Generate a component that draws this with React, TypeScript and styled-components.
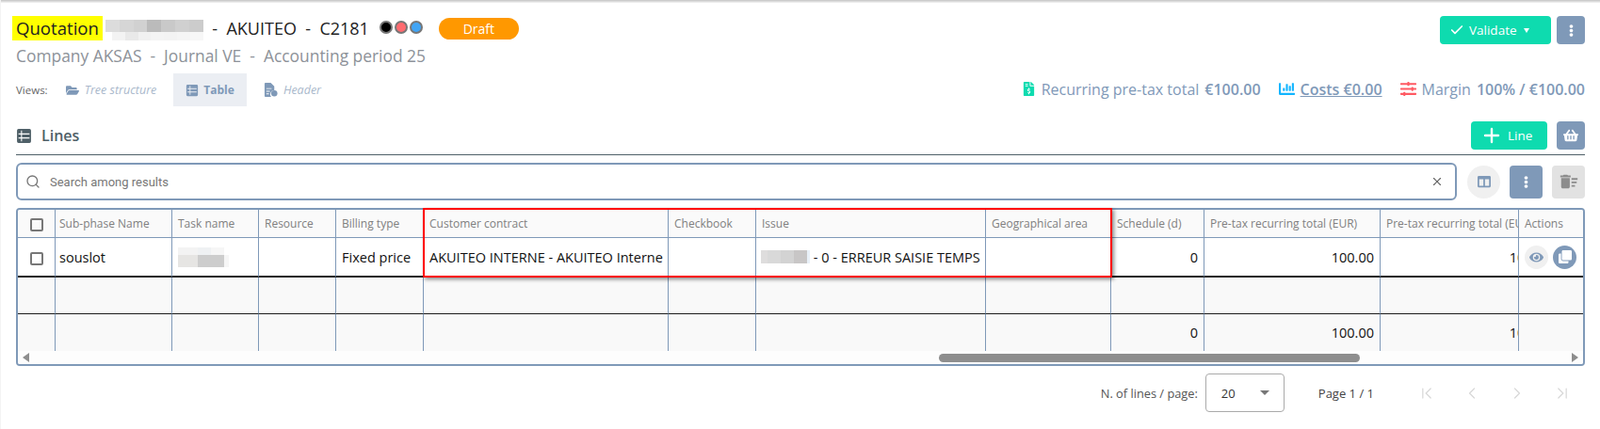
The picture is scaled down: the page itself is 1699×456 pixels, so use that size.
import styled, { createGlobalStyle } from "styled-components";
import {
  FaChartBar,
  FaClone,
  FaColumns,
  FaEllipsisV,
  FaEye,
  FaFileInvoiceDollar,
  FaFolderOpen,
  FaShoppingBasket,
  FaSlidersH,
} from "react-icons/fa";
import { MdDeleteSweep } from "react-icons/md";
import { Check, ChevronFirst, ChevronLast, ChevronLeft, ChevronRight, Plus, Search, X } from "lucide-react";

const BLUE = "#7f99b8";
const GREEN = "#0edbaf";

const columns = [40, 124, 92, 82, 93, 260, 93, 244, 133, 99, 187, 147, 68];

const TableIcon = ({ size }: { size: number }) => (
  <svg width={size} height={size} viewBox="0 0 16 16" fill="currentColor" fillRule="evenodd">
    <path d="M2.5 1h11A1.5 1.5 0 0 1 15 2.500v11a1.500 1.500 0 0 1-1.500 1.500h-11A1.500 1.500 0 0 1 1 13.500v-11A1.500 1.500 0 0 1 2.500 1zM2.500 5.500v1h11v-1zM2.500 9.500v1h11v-1zM5 2.500v3h1v-3zM5 6.500v3h1v-3zM5 10.500v3h1v-3z" />
  </svg>
);

const HeaderIcon = () => (
  <svg width="15" height="15" viewBox="0 0 16 16" fill="currentColor" fillRule="evenodd">
    <path d="M2 0h6l4 4v4.500a4.500 4.500 0 0 0-3.500 7.500H2a1 1 0 0 1-1-1V1a1 1 0 0 1 1-1zM3 6v1h6V6zM3 9v1h4V9zM3 12v1h3v-1z" />
    <circle cx="12" cy="12" r="3.500" />
  </svg>
);

const App = () => {
  return (
    <Page>
      <GlobalStyle />
      <TopShade />
      <Content>
        <HeadRow>
          <TitleRow>
            <Highlight>Quotation</Highlight>
            <Mosaic>
              <MosaicRow $h={13}>
                {["#dcdcdc", "#d6d6d6", "#d1d1d1", "#bbbbbb", "#c9c9c9", "#d0d0d0", "#cccccc"].map((c, i) => (
                  <Pixel key={i} $c={c} $w={14.8} />
                ))}
              </MosaicRow>
              <MosaicRow $h={9}>
                {["#ffffff", "#f3f3f3", "#e9e9e9", "#f1f1f1", "#f4f4f4", "#f3f3f3", "#f5f5f5", "#f7f7f7"].map((c, i) => (
                  <Pixel key={i} $c={c} $w={i === 0 ? 7 : 13.8} />
                ))}
              </MosaicRow>
            </Mosaic>
            <TitleText>{"  -  AKUITEO  -  C2181"}</TitleText>
            <Dots>
              <Dot $c="#000000" />
              <Dot $c="#ff6b70" />
              <Dot $c="#42a5f5" />
            </Dots>
            <StatusPill>Draft</StatusPill>
          </TitleRow>
          <ButtonGroup $gap={6}>
            <PrimaryButton $w={118}>
              <Check size={16} strokeWidth={2.5} />
              <span>Validate</span>
              <Caret />
            </PrimaryButton>
            <SquareButton>
              <FaEllipsisV size={13} />
            </SquareButton>
          </ButtonGroup>
        </HeadRow>
        <Subtitle>{"Company AKSAS  -  Journal VE  -  Accounting period 25"}</Subtitle>
        <ViewsRow>
          <Views>
            <ViewsLabel>Views:</ViewsLabel>
            <ViewTab>
              <FaFolderOpen size={14} />
              Tree structure
            </ViewTab>
            <ViewTab $active>
              <TableIcon size={14} />
              Table
            </ViewTab>
            <ViewTab>
              <HeaderIcon />
              Header
            </ViewTab>
          </Views>
          <Stats>
            <Stat>
              <FaFileInvoiceDollar size={15} color={GREEN} />
              <StatLabel>Recurring pre-tax total</StatLabel>
              <StatValue>€100.00</StatValue>
            </Stat>
            <Stat>
              <FaChartBar size={17} color="#12b5ff" />
              <StatLink>Costs €0.00</StatLink>
            </Stat>
            <Stat>
              <FaSlidersH size={17} color="#ff5a63" />
              <StatLabel>Margin</StatLabel>
              <StatValue>100% / €100.00</StatValue>
            </Stat>
          </Stats>
        </ViewsRow>
        <SectionHead>
          <SectionTitle>
            <TableIcon size={17} />
            Lines
          </SectionTitle>
          <ButtonGroup $gap={10}>
            <PrimaryButton $w={81}>
              <Plus size={24} strokeWidth={2.4} />
              <span>Line</span>
            </PrimaryButton>
            <SquareButton>
              <FaShoppingBasket size={16} />
            </SquareButton>
          </ButtonGroup>
        </SectionHead>
        <Toolbar>
          <SearchBox>
            <Search size={16} color="#777777" />
            <SearchInput placeholder="Search among results" />
            <X size={14} color="#666666" />
          </SearchBox>
          <RoundTool>
            <FaColumns size={14} />
          </RoundTool>
          <SquareTool>
            <FaEllipsisV size={13} />
          </SquareTool>
          <DisabledTool>
            <MdDeleteSweep size={22} />
          </DisabledTool>
        </Toolbar>
        <TableFrame>
          <TableBox>
            <Grid>
              <colgroup>
                {columns.map((w, i) => (
                  <col key={i} style={{ width: w }} />
                ))}
              </colgroup>
              <thead>
                <tr>
                  <Th $center>
                    <CheckBox />
                  </Th>
                  <Th>Sub-phase Name</Th>
                  <Th>Task name</Th>
                  <Th>Resource</Th>
                  <Th>Billing type</Th>
                  <Th>Customer contract</Th>
                  <Th>Checkbook</Th>
                  <Th>Issue</Th>
                  <Th>Geographical area</Th>
                  <Th>Schedule (d)</Th>
                  <Th>Pre-tax recurring total (EUR)</Th>
                  <Th>Pre-tax recurring total (EUR)</Th>
                  <Th $last>Actions</Th>
                </tr>
              </thead>
              <tbody>
                <DataRow>
                  <Td $center>
                    <CheckBox />
                  </Td>
                  <Td>souslot</Td>
                  <Td>
                    <TaskMosaic>
                      <MosaicRow $h={8}>
                        <Pixel $c="#f3f3f3" $w={21} />
                        <Pixel $c="#eff1f3" $w={14} />
                        <Pixel $c="#f6f6f6" $w={14} />
                      </MosaicRow>
                      <MosaicRow $h={13}>
                        <Pixel $c="#e6e5e3" $w={21} />
                        <Pixel $c="#cdcdcd" $w={28} />
                        <Pixel $c="#f6f6f6" $w={5} />
                      </MosaicRow>
                    </TaskMosaic>
                  </Td>
                  <Td />
                  <Td>Fixed price</Td>
                  <Td>AKUITEO INTERNE - AKUITEO Interne</Td>
                  <Td />
                  <Td>
                    <IssueCell>
                      <MosaicRow $h={14}>
                        <Pixel $c="#dedddd" $w={7} />
                        <Pixel $c="#d9d9d9" $w={14} />
                        <Pixel $c="#d3d3d3" $w={14} />
                        <Pixel $c="#c8c6c6" $w={14} />
                        <Pixel $c="#e9f1f8" $w={3} />
                      </MosaicRow>
                      {" - 0 - ERREUR SAISIE TEMPS"}
                    </IssueCell>
                  </Td>
                  <Td />
                  <Td $right>0</Td>
                  <Td $right>100.00</Td>
                  <Td>
                    <ClippedAmount>100.00</ClippedAmount>
                  </Td>
                  <Td $last>
                    <RowActions>
                      <GhostAction>
                        <FaEye size={15} />
                      </GhostAction>
                      <SolidAction>
                        <FaClone size={14} />
                      </SolidAction>
                    </RowActions>
                  </Td>
                </DataRow>
                <EmptyRow>
                  {columns.map((_, i) => (
                    <Td key={i} $last={i === columns.length - 1} />
                  ))}
                </EmptyRow>
                <TotalRow>
                  <Td />
                  <Td />
                  <Td />
                  <Td />
                  <Td />
                  <Td />
                  <Td />
                  <Td />
                  <Td />
                  <Td $right>0</Td>
                  <Td $right>100.00</Td>
                  <Td>
                    <ClippedAmount>100.00</ClippedAmount>
                  </Td>
                  <Td $last />
                </TotalRow>
              </tbody>
            </Grid>
            <ScrollBar>
              <ArrowLeft />
              <Thumb />
              <ArrowRight />
            </ScrollBar>
          </TableBox>
          <RedBox />
        </TableFrame>
        <Pagination>
          <PagerLabel>N. of lines / page:</PagerLabel>
          <PageSize>
            20
            <SelectCaret />
          </PageSize>
          <PageInfo>Page 1 / 1</PageInfo>
          <PagerButtons>
            <PagerButton>
              <ChevronFirst size={20} strokeWidth={1.5} />
            </PagerButton>
            <PagerButton>
              <ChevronLeft size={20} strokeWidth={1.5} />
            </PagerButton>
            <PagerButton>
              <ChevronRight size={20} strokeWidth={1.5} />
            </PagerButton>
            <PagerButton>
              <ChevronLast size={20} strokeWidth={1.5} />
            </PagerButton>
          </PagerButtons>
        </Pagination>
      </Content>
    </Page>
  );
};

const GlobalStyle = createGlobalStyle`
  html, body {
    margin: 0;
    padding: 0;
    background: #fff;
  }
  * {
    box-sizing: border-box;
  }
`;

const Page = styled.div`
  width: 1699px;
  height: 456px;
  overflow: hidden;
  background: #fff;
  border-left: 1px solid #f3f3f3;
  font-family: "Open Sans", "Liberation Sans", sans-serif;
`;

const TopShade = styled.div`
  height: 3px;
  background: linear-gradient(#c4c4c4, #f4f4f4);
`;

const Content = styled.div`
  padding: 14px 16px 0 16px;
`;

const HeadRow = styled.div`
  display: flex;
  justify-content: space-between;
  height: 30px;
`;

const TitleRow = styled.div`
  display: flex;
  align-items: flex-start;
  height: 26px;
`;

const Highlight = styled.span`
  background: #ffff00;
  margin-left: -4px;
  padding: 0 4px;
  height: 26px;
  line-height: 26px;
  font-size: 18.6px;
  color: #222;
`;

const Mosaic = styled.div`
  margin: 4px 0 0 3px;
  width: 104px;
  overflow: hidden;
`;

const MosaicRow = styled.div<{ $h: number }>`
  display: flex;
  height: ${(p) => p.$h}px;
`;

const Pixel = styled.div<{ $c: string; $w: number }>`
  flex: none;
  width: ${(p) => p.$w}px;
  background: ${(p) => p.$c};
`;

const TitleText = styled.span`
  white-space: pre;
  font-size: 18px;
  line-height: 26px;
  color: #222;
`;

const Dots = styled.div`
  display: flex;
  gap: 2px;
  margin: 5px 0 0 11px;
`;

const Dot = styled.span<{ $c: string }>`
  width: 14px;
  height: 14px;
  border-radius: 50%;
  border: 2px solid #777;
  background: ${(p) => p.$c};
`;

const StatusPill = styled.div`
  width: 85px;
  height: 23px;
  margin: 2px 0 0 17px;
  border-radius: 12px;
  background: #ff9800;
  color: #fff;
  font-size: 14px;
  line-height: 23px;
  text-align: center;
`;

const ButtonGroup = styled.div<{ $gap: number }>`
  display: flex;
  gap: ${(p) => p.$gap}px;
`;

const PrimaryButton = styled.div<{ $w: number }>`
  display: flex;
  align-items: center;
  gap: 5px;
  width: ${(p) => p.$w}px;
  height: 30px;
  padding-left: 10px;
  border-radius: 4px;
  background: ${GREEN};
  color: #fff;
  font-size: 13.5px;
`;

const Caret = styled.span`
  margin-left: 2px;
  border-left: 3px solid transparent;
  border-right: 3px solid transparent;
  border-top: 5px solid #fff;
`;

const SquareButton = styled.div`
  display: flex;
  align-items: center;
  justify-content: center;
  width: 30px;
  height: 30px;
  border-radius: 4px;
  background: ${BLUE};
  color: #fff;
`;

const Subtitle = styled.div`
  margin-top: 2px;
  height: 20px;
  line-height: 20px;
  white-space: pre;
  font-size: 17.4px;
  color: #8d9299;
`;

const ViewsRow = styled.div`
  display: flex;
  justify-content: space-between;
  align-items: center;
  margin-top: 9px;
  height: 35px;
`;

const Views = styled.div`
  display: flex;
  align-items: center;
  gap: 4px;
`;

const ViewsLabel = styled.span`
  margin-right: 1px;
  font-size: 11.5px;
  color: #666;
`;

const ViewTab = styled.div<{ $active?: boolean }>`
  display: flex;
  align-items: center;
  gap: ${(p) => (p.$active ? 5 : 6)}px;
  height: 35px;
  padding: 0 ${(p) => (p.$active ? 13 : 14)}px;
  font-size: ${(p) => (p.$active ? 12 : 12.5)}px;
  font-style: ${(p) => (p.$active ? "normal" : "italic")};
  font-weight: ${(p) => (p.$active ? 700 : 400)};
  color: ${(p) => (p.$active ? BLUE : "#a9b8cb")};
  background: ${(p) => (p.$active ? "#ebeef3" : "transparent")};

  svg {
    color: ${BLUE};
  }
`;

const Stats = styled.div`
  display: flex;
  align-items: center;
  gap: 19px;
  margin-top: -2px;
`;

const Stat = styled.div`
  display: flex;
  align-items: center;
  gap: 6px;
  font-size: 16px;
  color: ${BLUE};
`;

const StatLabel = styled.span``;

const StatValue = styled.span`
  font-size: 16px;
  font-weight: 600;
`;

const StatLink = styled.span`
  font-size: 16px;
  font-weight: 600;
  text-decoration: underline;
`;

const SectionHead = styled.div`
  display: flex;
  justify-content: space-between;
  margin-top: 16px;
  height: 36px;
  padding-bottom: 5px;
  border-bottom: 1px solid #4f6068;
`;

const SectionTitle = styled.div`
  display: flex;
  align-items: center;
  gap: 10px;
  font-size: 16px;
  font-weight: 600;
  color: #4f6068;
`;

const Toolbar = styled.div`
  display: flex;
  align-items: center;
  margin-top: 8px;
  height: 40px;
`;

const SearchBox = styled.div`
  display: flex;
  align-items: center;
  gap: 8px;
  flex: 1;
  height: 40px;
  padding: 0 12px 0 8px;
  border: 2px solid ${BLUE};
  border-radius: 6px;
`;

const SearchInput = styled.input`
  flex: 1;
  border: 0;
  outline: 0;
  background: transparent;
  font-family: Roboto, sans-serif;
  font-size: 13px;

  &::placeholder {
    color: #777;
    opacity: 1;
  }
`;

const RoundTool = styled.div`
  display: flex;
  align-items: center;
  justify-content: center;
  width: 35px;
  height: 35px;
  margin-left: 11px;
  border-radius: 50%;
  background: #f0f0f0;
  color: ${BLUE};
`;

const SquareTool = styled.div`
  display: flex;
  align-items: center;
  justify-content: center;
  width: 35px;
  height: 35px;
  margin-left: 10px;
  border-radius: 4px;
  background: ${BLUE};
  color: #fff;
`;

const DisabledTool = styled(SquareTool)`
  background: #e2e2e2;
  color: #8c8c8c;
`;

const TableFrame = styled.div`
  position: relative;
  margin-top: 8px;
`;

const TableBox = styled.div`
  height: 168px;
  border: 2px solid ${BLUE};
  border-radius: 4px;
  overflow: hidden;
`;

const Grid = styled.table`
  width: 1662px;
  table-layout: fixed;
  border-collapse: separate;
  border-spacing: 0;

  th:nth-child(2),
  td:nth-child(2) {
    padding-left: 4px;
  }
`;

const Th = styled.th<{ $center?: boolean; $last?: boolean }>`
  height: 30px;
  padding: 0 6px;
  border-bottom: 1px solid ${BLUE};
  border-right: ${(p) => (p.$last ? "0" : `1px solid ${BLUE}`)};
  background: #fafafa;
  color: #808080;
  font-size: 12px;
  font-weight: 400;
  text-align: ${(p) => (p.$center ? "center" : "left")};
  white-space: nowrap;
  overflow: hidden;
`;

const Td = styled.td<{ $center?: boolean; $right?: boolean; $last?: boolean }>`
  padding: 0 6px;
  border-right: ${(p) => (p.$last ? "0" : `1px solid ${BLUE}`)};
  color: #111;
  font-size: 14.5px;
  text-align: ${(p) => (p.$center ? "center" : p.$right ? "right" : "left")};
  white-space: nowrap;
  overflow: hidden;
`;

const DataRow = styled.tr`
  height: 42px;

  td {
    border-bottom: 2px solid #1c1c1c;
    background: #fff;
  }
`;

const EmptyRow = styled.tr`
  height: 39px;

  td {
    border-bottom: 1px solid #1c1c1c;
    background: #f9f9f9;
  }
`;

const TotalRow = styled.tr`
  height: 39px;

  td {
    background: #f9f9f9;
  }
`;

const CheckBox = styled.span`
  display: inline-block;
  width: 14px;
  height: 14px;
  vertical-align: middle;
  border: 2px solid #777;
  border-radius: 2px;
`;

const TaskMosaic = styled.div`
  width: 54px;
`;

const IssueCell = styled.div`
  display: flex;
  align-items: center;
  margin-left: -1px;
  white-space: pre;
`;

const ClippedAmount = styled.div`
  width: 176px;
  text-align: right;
`;

const RowActions = styled.div`
  display: flex;
  gap: 5px;
`;

const GhostAction = styled.div`
  display: flex;
  align-items: center;
  justify-content: center;
  width: 25px;
  height: 25px;
  border-radius: 50%;
  background: #f0f0f0;
  color: ${BLUE};
`;

const SolidAction = styled(GhostAction)`
  background: ${BLUE};
  color: #fff;
`;

const ScrollBar = styled.div`
  display: flex;
  align-items: center;
  height: 14px;
  padding: 0 5px;
  background: #fdfdfd;
`;

const ArrowLeft = styled.span`
  border-top: 5px solid transparent;
  border-bottom: 5px solid transparent;
  border-right: 7px solid #8e8e8e;
`;

const Thumb = styled.div`
  width: 447px;
  height: 9px;
  margin-left: 966px;
  border-radius: 5px;
  background: #8e8e8e;
`;

const ArrowRight = styled.span`
  margin-left: auto;
  border-top: 5px solid transparent;
  border-bottom: 5px solid transparent;
  border-left: 7px solid #8e8e8e;
`;

const RedBox = styled.div`
  position: absolute;
  left: 432px;
  top: 0;
  width: 732px;
  height: 74px;
  border: 2px solid #ff0000;
  box-shadow: 2px 2px 4px rgba(0, 0, 0, 0.45);
  pointer-events: none;
`;

const Pagination = styled.div`
  display: flex;
  align-items: center;
  justify-content: flex-end;
  margin-top: 8px;
  height: 41px;
`;

const PagerLabel = styled.span`
  font-size: 12.8px;
  color: #555;
`;

const PageSize = styled.div`
  display: flex;
  align-items: center;
  justify-content: space-between;
  width: 84px;
  height: 41px;
  margin-left: 8px;
  padding: 0 15px 0 16px;
  border: 1px solid #aaa;
  border-radius: 4px;
  font-size: 13px;
  color: #333;
`;

const SelectCaret = styled.span`
  border-left: 5px solid transparent;
  border-right: 5px solid transparent;
  border-top: 5px solid #777;
`;

const PageInfo = styled.span`
  margin: 0 32px 0 36px;
  font-size: 13px;
  color: #444;
`;

const PagerButtons = styled.div`
  display: flex;
`;

const PagerButton = styled.div`
  display: flex;
  align-items: center;
  justify-content: center;
  width: 48px;
  height: 41px;
  color: #d8d8d8;
`;

export default App;
